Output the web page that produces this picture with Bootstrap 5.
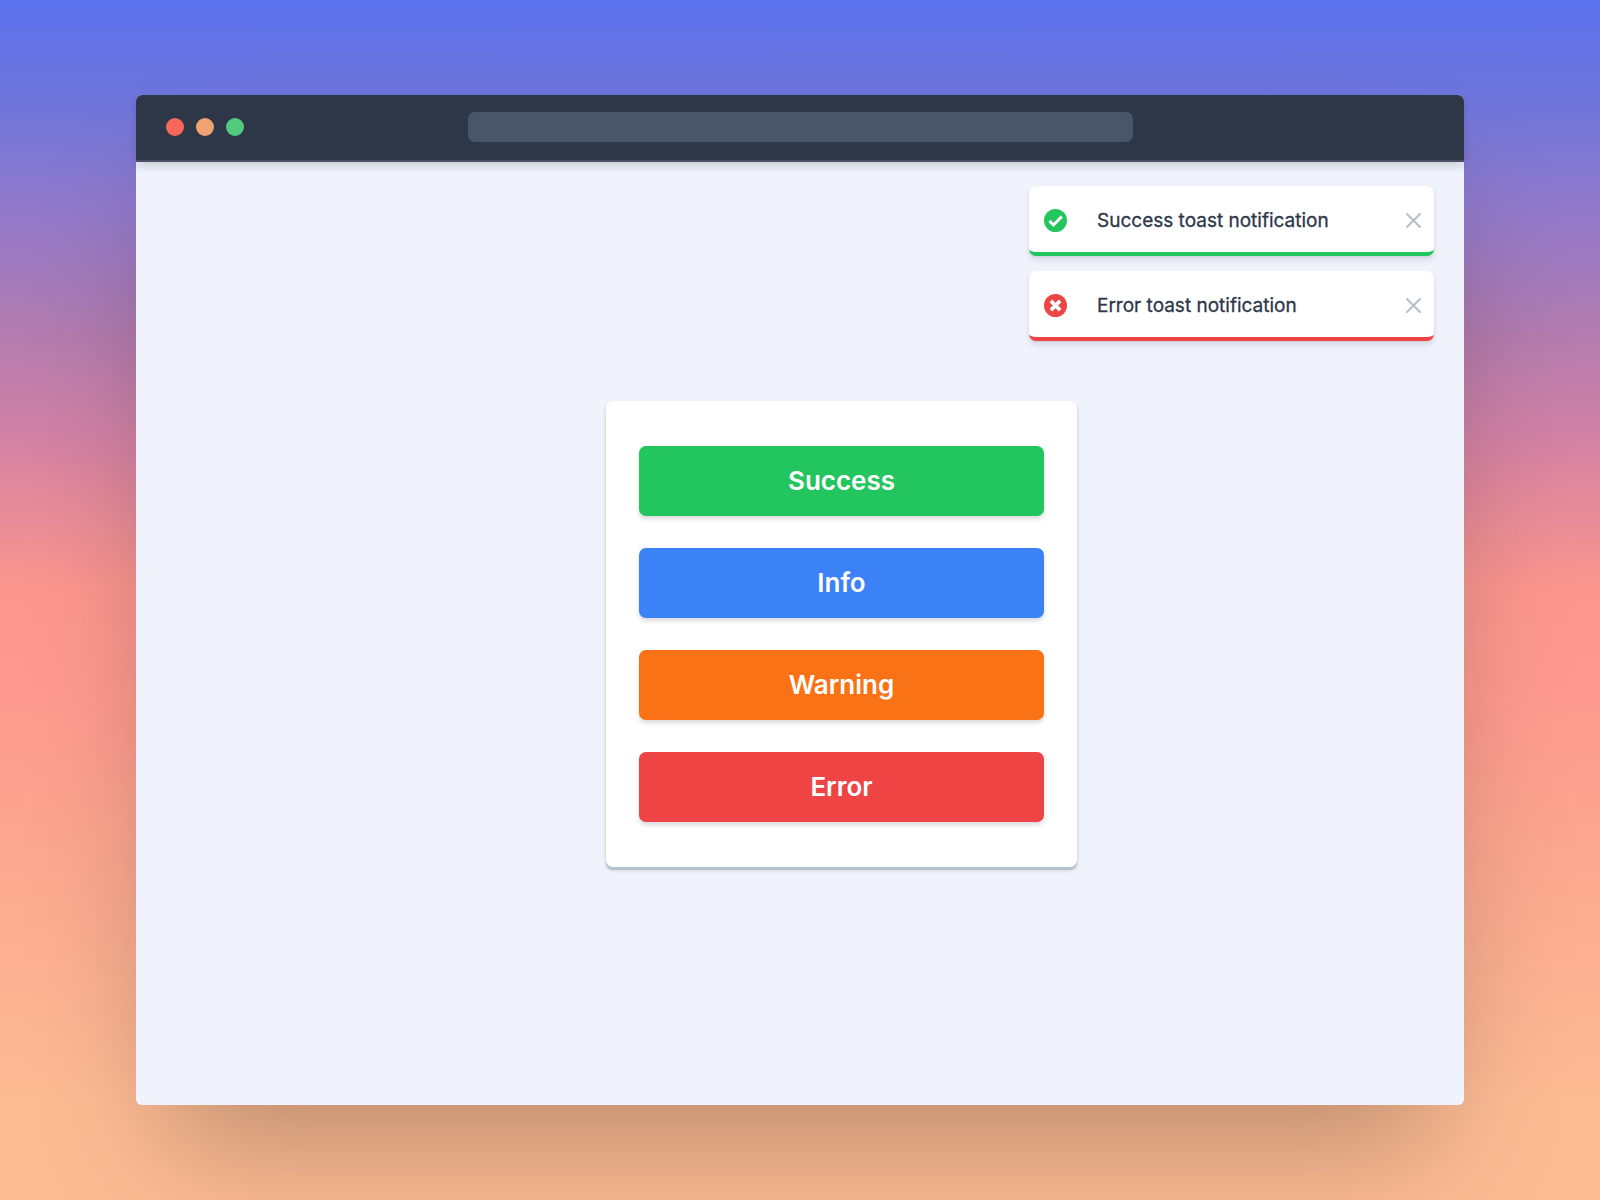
<!DOCTYPE html>
<html lang="en">
<head>
<meta charset="utf-8">
<meta name="viewport" content="width=device-width, initial-scale=1">
<title>Toast notifications</title>
<link href="https://cdn.jsdelivr.net/npm/bootstrap@5.3.0/dist/css/bootstrap.min.css" rel="stylesheet">
<style>
  body {
    padding: 95px 0;
    font-family: Inter, "Liberation Sans", sans-serif;
    color: #2d3748;
    background: linear-gradient(180deg, #5c72ee 0%, #7175d9 9%, #937ac9 18%, #b37cae 28%, #d884a2 38%, #fb968e 49%, #fe9a8f 58%, #fbab90 75%, #fdbc94 92%, #fdbc94 100%) no-repeat;
  }
  .browser {
    width: 83%;
    background: #f0f3fc;
    border-radius: 6px;
    box-shadow: 0 70px 120px -30px rgba(0, 0, 0, .26);
  }
  .browser-bar {
    height: 67px;
    padding: 0 30px 2px;
    background: #2d3748;
    border-bottom: 2px solid #4a5067;
    border-radius: 6px 6px 0 0;
    box-shadow: 0 5px 8px rgba(0, 0, 0, .13);
  }
  .browser-side { flex: 1 1 0; gap: 12px; }
  .dot { width: 18px; height: 18px; }
  .dot-close { background: #f9675a; }
  .dot-min { background: #f0a272; }
  .dot-max { background: #52cb80; }
  .address {
    min-width: 0;
    height: 30px;
    padding: 0 12px;
    color: #e2e8f0;
    background: #4a5568;
    border: 0;
    border-radius: 7px;
  }
  .browser-bar .address { flex: 0 1 665px; }
  .toast-stack { padding: 24px 30px; gap: 15px; }
  .note {
    width: 405px;
    max-width: 100%;
    height: 70px;
    padding: 2px 13px 0 15px;
    font-size: 19px;
    background: #fff;
    border-bottom: 4px solid;
    border-radius: 7px;
    box-shadow: 0 4px 6px rgba(0, 0, 0, .1), 0 1px 2px rgba(0, 0, 0, .06);
  }
  .note-success { border-color: #22c55e; }
  .note-error { border-color: #ef4444; }
  .note-text {
    margin-left: 30px;
    padding-top: 2px;
    font-weight: 400;
    -webkit-text-stroke: .3px currentColor;
  }
  .panel {
    width: 471px;
    max-width: 100%;
    margin-left: 83px;
    padding: 45px 33px;
    gap: 32px;
    background: #fff;
    border-radius: 7px;
    box-shadow: 0 3px 1px #b7c2ce, 0 3px 4px rgba(0, 0, 0, .16);
  }
  .panel .btn {
    --bs-btn-color: #fff;
    --bs-btn-hover-color: #fff;
    --bs-btn-active-color: #fff;
    height: 70px;
    border: 0;
    border-radius: 7px;
    font-size: 26px;
    font-weight: 600;
    box-shadow: 0 3px 4px rgba(30, 30, 60, .16);
  }
  .fill-success { --bs-btn-bg: #22c55e; --bs-btn-hover-bg: #16a34a; }
  .fill-info { --bs-btn-bg: #3b82f6; --bs-btn-hover-bg: #2563eb; }
  .fill-warning { --bs-btn-bg: #f97316; --bs-btn-hover-bg: #ea580c; }
  .fill-error { --bs-btn-bg: #ef4444; --bs-btn-hover-bg: #dc2626; }
</style>
<script src="https://cdn.jsdelivr.net/npm/bootstrap@5.3.0/dist/js/bootstrap.bundle.min.js"></script>
</head>
<body class="min-vh-100 d-flex justify-content-center align-items-stretch">
<div class="browser d-flex flex-column">
  <header class="browser-bar d-flex align-items-center">
    <div class="browser-side d-flex">
      <span class="dot dot-close rounded-circle"></span>
      <span class="dot dot-min rounded-circle"></span>
      <span class="dot dot-max rounded-circle"></span>
    </div>
    <input class="address" type="text" aria-label="Address">
    <div class="browser-side"></div>
  </header>
  <main class="position-relative flex-grow-1 d-flex align-items-center justify-content-center">
    <div class="toast-stack position-absolute top-0 end-0 d-flex flex-column">
      <div class="note note-success d-flex align-items-center" role="status">
        <svg width="23" height="23" viewBox="0 0 24 24" aria-hidden="true"><circle cx="12" cy="12" r="12" fill="#22c55e"/><path d="M5.6 12.4l4.3 4.3 8.6-8.8" fill="none" stroke="#fff" stroke-width="3.1"/></svg>
        <span class="note-text">Success toast notification</span>
        <button type="button" class="btn p-0 border-0 ms-auto d-flex" aria-label="Close"><svg width="15" height="15" viewBox="0 0 15 15"><path d="M1 1l13 13M14 1L1 14" stroke="#b4bfcc" stroke-width="2" stroke-linecap="round"/></svg></button>
      </div>
      <div class="note note-error d-flex align-items-center" role="alert">
        <svg width="23" height="23" viewBox="0 0 24 24" aria-hidden="true"><circle cx="12" cy="12" r="12" fill="#ef4444"/><path d="M7.2 7.2l9.6 9.6M16.8 7.2l-9.6 9.6" stroke="#fff" stroke-width="3.8"/></svg>
        <span class="note-text">Error toast notification</span>
        <button type="button" class="btn p-0 border-0 ms-auto d-flex" aria-label="Close"><svg width="15" height="15" viewBox="0 0 15 15"><path d="M1 1l13 13M14 1L1 14" stroke="#b4bfcc" stroke-width="2" stroke-linecap="round"/></svg></button>
      </div>
    </div>
    <div class="panel d-flex flex-column">
      <button type="button" class="btn fill-success">Success</button>
      <button type="button" class="btn fill-info">Info</button>
      <button type="button" class="btn fill-warning">Warning</button>
      <button type="button" class="btn fill-error">Error</button>
    </div>
  </main>
</div>
</body>
</html>
